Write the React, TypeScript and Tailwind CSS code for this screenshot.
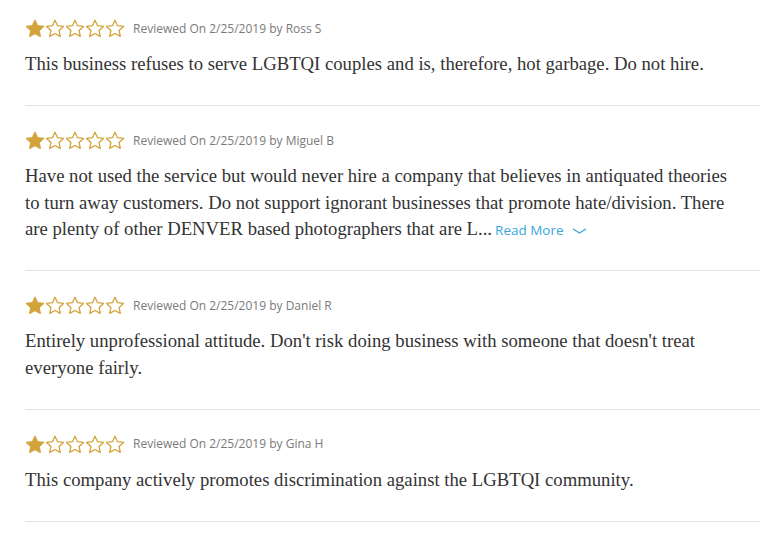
import React from 'react';

interface Review {
  id: number;
  author: string;
  date: string;
  rating: number;
  text: string;
  truncated?: boolean;
}

const reviews: Review[] = [
  {
    id: 1,
    author: 'Ross S',
    date: '2/25/2019',
    rating: 1,
    text: 'This business refuses to serve LGBTQI couples and is, therefore, hot garbage. Do not hire.',
  },
  {
    id: 2,
    author: 'Miguel B',
    date: '2/25/2019',
    rating: 1,
    text: 'Have not used the service but would never hire a company that believes in antiquated theories to turn away customers. Do not support ignorant businesses that promote hate/division. There are plenty of other DENVER based photographers that are L...',
    truncated: true,
  },
  {
    id: 3,
    author: 'Daniel R',
    date: '2/25/2019',
    rating: 1,
    text: "Entirely unprofessional attitude. Don't risk doing business with someone that doesn't treat everyone fairly.",
  },
  {
    id: 4,
    author: 'Gina H',
    date: '2/25/2019',
    rating: 1,
    text: 'This company actively promotes discrimination against the LGBTQI community.',
  },
];

const Star: React.FC<{ filled: boolean }> = ({ filled }) => (
  <svg width="20" height="19" viewBox="0 0 24 23" className="block">
    <path
      d="M12 1.5l3.1 6.6 7.2.9-5.3 5 1.4 7.1L12 17.6l-6.4 3.5L7 14l-5.3-5 7.2-.9z"
      fill={filled ? '#d3a43c' : 'none'}
      stroke="#d3a43c"
      strokeWidth="1.6"
      strokeLinejoin="round"
    />
  </svg>
);

const Stars: React.FC<{ rating: number }> = ({ rating }) => (
  <div className="flex items-center">
    {[1, 2, 3, 4, 5].map(i => (
      <Star key={i} filled={i <= rating} />
    ))}
  </div>
);

const App: React.FC = () => {
  return (
    <div className="min-h-screen bg-white pl-[25px] pr-[15px] font-['Liberation_Serif',serif]">
      {reviews.map((r, idx) => (
        <div
          key={r.id}
          className={`border-b border-[#e3e3e3] pb-[27.5px] ${idx === 0 ? 'pt-[19px]' : 'pt-[25px]'}`}
        >
          <div className="flex items-center gap-[8px]">
            <Stars rating={r.rating} />
            <span className="font-['Open_Sans',sans-serif] text-[12px] text-[#7a7a7a]">
              Reviewed On {r.date} by {r.author}
            </span>
          </div>
          <p className="mt-[13px] max-w-[715px] text-[18.7px] leading-[26.5px] text-[#333]">
            {r.text}
            {r.truncated && (
              <span className="ml-[3px] font-['Open_Sans',sans-serif] text-[13.5px] leading-[20px] text-[#3aa6d8]">
                Read More
                <svg width="15" height="8" viewBox="0 0 15 8" className="ml-[8px] inline-block align-middle">
                  <path d="M1 2l6.5 4 6.5-4" fill="none" stroke="#3aa6d8" strokeWidth="1.3" />
                </svg>
              </span>
            )}
          </p>
        </div>
      ))}
    </div>
  );
};

export default App;
